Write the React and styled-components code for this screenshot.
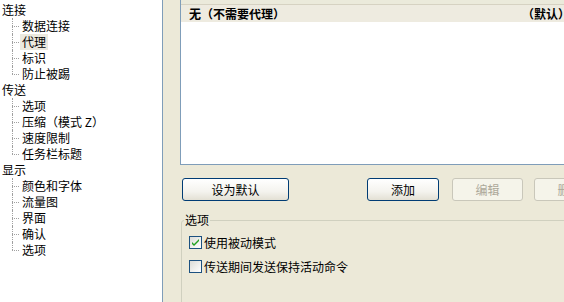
import React from 'react';
import styled, { createGlobalStyle } from 'styled-components';

const GlobalStyle = createGlobalStyle`
  html, body {
    margin: 0;
    padding: 0;
    background: #ece9d8;
  }
  body {
    font-family: "Noto Sans CJK SC", "DejaVu Sans", sans-serif;
    font-size: 12px;
    color: #000;
  }
`;

const Window = styled.div`
  display: flex;
  width: 564px;
  height: 302px;
  overflow: hidden;
  background: #ece9d8;
`;

/* left tree */
const Tree = styled.div`
  flex: 0 0 163px;
  background: #fff;
  border-right: 1px solid #7f9db9;
  padding-top: 2px;
  box-sizing: border-box;
`;

const Node = styled.div``;

const Label = styled.span`
  display: inline-block;
  vertical-align: top;
  height: 16px;
  line-height: 16px;
  padding: 0 2px;
  white-space: nowrap;
  background: ${({ $selected }) => ($selected ? '#ebe9df' : 'transparent')};
`;

const RootRow = styled.div`
  height: 16px;
`;

const Children = styled.ul`
  list-style: none;
  margin: 0;
  padding: 0;
`;

const Child = styled.li`
  position: relative;
  height: 16px;
  padding-left: 20px;

  /* dotted connectors */
  &::before {
    content: '';
    position: absolute;
    left: 12px;
    top: 8px;
    width: 7px;
    border-top: 1px dotted #a0a0a0;
  }
  &::after {
    content: '';
    position: absolute;
    left: 12px;
    top: 0;
    height: ${({ $last }) => ($last ? '8px' : '16px')};
    border-left: 1px dotted #a0a0a0;
  }
`;

/* right side */
const Right = styled.div`
  flex: 0 0 460px;
  padding-left: 17px;
  display: flex;
  flex-direction: column;
  & > * {
    flex-shrink: 0;
  }
`;

const ListBox = styled.div`
  width: 440px;
  height: 165px;
  box-sizing: border-box;
  background: #fff;
  border: 1px solid #7f9db9;
  border-top: none;
`;

const ListHeader = styled.div`
  height: 4px;
  background: #ebeadb;
  border-bottom: 1px solid #d6d2c2;
`;

const ListRow = styled.div`
  display: flex;
  height: 17px;
  line-height: 17px;
  padding-left: 8px;
  background: #eeebe0;
  font-weight: bold;
`;

const Cell = styled.span`
  flex: 0 0 ${({ $w }) => $w || 'auto'};
  white-space: nowrap;
`;

const Buttons = styled.div`
  display: flex;
  margin-top: 13px;
  padding-left: 2px;
`;

const Button = styled.button`
  width: ${({ $w }) => $w}px;
  height: 23px;
  margin-left: ${({ $ml }) => $ml || 0}px;
  padding: 0;
  font-family: inherit;
  font-size: 12px;
  border-radius: 3px;
  border: 1px solid ${({ disabled }) => (disabled ? '#c9c7ba' : '#003c74')};
  color: ${({ disabled }) => (disabled ? '#aca899' : '#000')};
  background: ${({ disabled }) =>
    disabled
      ? '#f5f4ea'
      : 'linear-gradient(#ffffff 0%, #f4f3ee 60%, #e3e0d4 100%)'};
  flex: 0 0 auto;
`;

const Group = styled.div`
  display: flex;
  flex-direction: column;
  margin-top: 19px;
  margin-left: 1px;
  width: 440px;
  height: 120px;
  border: 1px solid #d0d0bf;
  border-radius: 3px;
`;

const Legend = styled.span`
  align-self: flex-start;
  margin: -8px 0 0 2px;
  padding: 0 1px;
  height: 14px;
  line-height: 14px;
  background: #ece9d8;
`;

const Options = styled.div`
  display: flex;
  flex-direction: column;
  gap: 7px;
  margin-top: 7px;
  padding-left: 7px;
`;

const CheckRow = styled.label`
  display: flex;
  align-items: center;
  height: 17px;
  gap: 2px;
`;

const Box = styled.span`
  display: flex;
  align-items: center;
  justify-content: center;
  width: 13px;
  height: 13px;
  box-sizing: border-box;
  border: 1px solid #1c5180;
  background: linear-gradient(135deg, #dcdcd7 0%, #ffffff 100%);
`;

const Check = ({ checked, children }) => (
  <CheckRow>
    <Box>
      {checked && (
        <svg width="7" height="7" viewBox="0 0 7 7">
          <path d="M0 3 L2 5 L7 0 L7 2 L2 7 L0 5 Z" fill="#21a121" />
        </svg>
      )}
    </Box>
    {children}
  </CheckRow>
);

const tree = [
  { name: '连接', items: ['数据连接', '代理', '标识', '防止被踢'] },
  { name: '传送', items: ['选项', '压缩（模式 Z）', '速度限制', '任务栏标题'] },
  { name: '显示', items: ['颜色和字体', '流量图', '界面', '确认', '选项'] },
];

export default function App() {
  return (
    <>
      <GlobalStyle />
      <Window>
        <Tree>
          {tree.map((g) => (
            <Node key={g.name}>
              <RootRow>
                <Label>{g.name}</Label>
              </RootRow>
              <Children>
                {g.items.map((it, i) => (
                  <Child key={it + i} $last={i === g.items.length - 1}>
                    <Label $selected={g.name === '连接' && it === '代理'}>{it}</Label>
                  </Child>
                ))}
              </Children>
            </Node>
          ))}
        </Tree>
        <Right>
          <ListBox>
            <ListHeader />
            <ListRow>
              <Cell $w="333px">无（不需要代理）</Cell>
              <Cell>（默认）</Cell>
            </ListRow>
          </ListBox>
          <Buttons>
            <Button $w={107}>设为默认</Button>
            <Button $w={72} $ml={78}>添加</Button>
            <Button $w={71} $ml={13} disabled>编辑</Button>
            <Button $w={71} $ml={11} disabled>删除</Button>
          </Buttons>
          <Group>
            <Legend>选项</Legend>
            <Options>
              <Check checked>使用被动模式</Check>
              <Check>传送期间发送保持活动命令</Check>
            </Options>
          </Group>
        </Right>
      </Window>
    </>
  );
}
